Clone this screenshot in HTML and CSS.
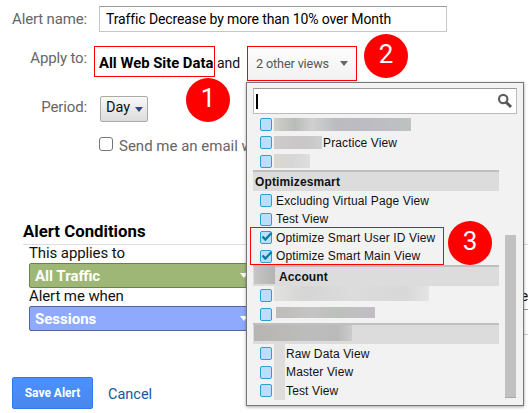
FILE: index.html
```html
<!DOCTYPE html>
<html lang="en">
<head>
    <meta charset="UTF-8">
    <title>Custom Alert</title>
    <link rel="stylesheet" href="styles.css">
</head>
<body>
    <div class="page">
        <div class="row row-name">
            <label class="label" for="alertName">Alert name:</label>
            <input class="name-input" id="alertName" type="text" value="Traffic Decrease by more than 10% over Month">
        </div>
        <div class="row row-apply">
            <span class="label">Apply to:</span>
            <strong class="site">All Web Site Data</strong>
            <span class="and">and</span>
            <div class="views"><span>2 other views</span><i class="arrow"></i></div>
        </div>
        <div class="row row-period">
            <span class="label">Period:</span>
            <div class="day">Day<i class="arrow arrow-blue"></i></div>
        </div>
        <div class="row row-email">
            <span class="box"></span>
            <span class="email-text">Send me an email w</span>
        </div>

        <h2>Alert Conditions</h2>
        <div class="conditions">
            <div class="column">
                <div class="caption">This applies to</div>
                <div class="select green"><span>All Traffic</span><i class="arrow arrow-white"></i></div>
                <div class="caption">Alert me when</div>
                <div class="select blue"><span>Sessions</span><i class="arrow arrow-white"></i></div>
            </div>
            <div class="column value">
                <div class="caption">e</div>
                <div class="value-input"></div>
            </div>
        </div>

        <div class="buttons">
            <div class="save">Save Alert</div>
            <a class="cancel">Cancel</a>
        </div>
    </div>

    <div class="popup">
        <div class="search">
            <span class="caret"></span>
            <svg width="16" height="16" viewBox="0 0 16 16">
                <circle cx="6.2" cy="6" r="4.2" fill="none" stroke="#606060" stroke-width="2.2"/>
                <path d="M9.2 9.2 L14 14" stroke="#555" stroke-width="3" fill="none"/>
            </svg>
        </div>
        <div class="scroll">
            <div class="list">
                <div class="item"><span class="check"></span><span class="blur b1"></span></div>
                <div class="item"><span class="check"></span><span class="blur b2"></span><span class="after">Practice View</span></div>
                <div class="item"><span class="check"></span><span class="blur b3"></span></div>
                <div class="group">Optimizesmart</div>
                <div class="item"><span class="check"></span><span class="text">Excluding Virtual Page View</span></div>
                <div class="item"><span class="check"></span><span class="text">Test View</span></div>
                <div class="item"><span class="check"><svg class="tick" width="14" height="12" viewBox="0 0 14 12"><path d="M2.5 5.5 L5.3 8.6 L11.5 2" fill="none" stroke="#087ba4" stroke-width="2.3"/></svg></span><span class="text">Optimize Smart User ID View</span></div>
                <div class="item"><span class="check"><svg class="tick" width="14" height="12" viewBox="0 0 14 12"><path d="M2.5 5.5 L5.3 8.6 L11.5 2" fill="none" stroke="#087ba4" stroke-width="2.3"/></svg></span><span class="text">Optimize Smart Main View</span></div>
                <div class="group"><span class="blur b4"></span>Account</div>
                <div class="item"><span class="check"></span><span class="blur b5"></span></div>
                <div class="item"><span class="check"></span><span class="blur b6"></span></div>
                <div class="group"><span class="blur b7"></span></div>
                <div class="item"><span class="check"></span><span class="blur b8"></span><span class="after">Raw Data View</span></div>
                <div class="item"><span class="check"></span><span class="blur b8"></span><span class="after">Master View</span></div>
                <div class="item"><span class="check"></span><span class="blur b8"></span><span class="after">Test View</span></div>
            </div>
            <div class="thumb"></div>
        </div>
    </div>

    <!-- annotations -->
    <div class="frame"></div>
    <div class="mark mark1">1</div>
    <div class="mark mark2">2</div>
    <div class="mark mark3">3</div>
</body>
</html>
```
FILE: styles.css
```css
* {
    box-sizing: border-box;
}

body {
    margin: 0;
    width: 528px;
    height: 413px;
    overflow: hidden;
    position: relative;
    background: #fff;
    font-family: Roboto, sans-serif;
    font-size: 15px;
    line-height: 18px;
    color: #111;
}

.page {
    padding-top: 6px;
}

.row {
    display: flex;
    align-items: flex-start;
}

.label {
    width: 87px;
    margin-right: 12px;
    text-align: right;
    letter-spacing: -0.15px;
    color: #666;
    flex: none;
}

.row-name {
    height: 40px;
}

.row-name .label {
    padding-top: 4px;
}

.name-input {
    width: 348px;
    height: 26px;
    padding: 0 6px;
    border: 1px solid #c6c6c6;
    border-top-color: #999;
    font-family: Roboto, sans-serif;
    font-size: 14px;
    letter-spacing: -0.12px;
    color: #000;
}

.row-apply {
    height: 50px;
}

.row-apply .label {
    margin-right: 7px;
    padding-top: 3px;
}

.site {
    width: 121px;
    height: 31px;
    border: 1px solid red;
    padding-left: 4px;
    font-size: 14.8px;
    line-height: 33px;
    color: #000;
    white-space: nowrap;
}

.and {
    width: 32px;
    padding-left: 2px;
    line-height: 35px;
    font-size: 14px;
}

.views {
    display: flex;
    align-items: center;
    justify-content: space-between;
    width: 110px;
    height: 35px;
    padding: 0 8px 0 8px;
    border: 1px solid red;
    background: linear-gradient(#fdfdfd, #f1f1f1);
    font-size: 12.7px;
    letter-spacing: -0.15px;
    color: #555;
}

.arrow {
    border: 4px solid transparent;
    border-top: 5px solid #666;
    border-bottom: 0;
}

.row-period {
    height: 41px;
}

.row-period .label {
    padding-top: 2px;
}

.day {
    display: flex;
    align-items: center;
    justify-content: space-between;
    width: 48px;
    height: 26px;
    margin-left: 1px;
    padding: 0 4px 2px 5px;
    border: 1px solid #aaa;
    border-radius: 2px;
    background: linear-gradient(#f8f8f8, #dcdcdc);
    font-size: 14.5px;
}

.arrow-blue {
    border-top-color: #33487c;
    margin-top: 2px;
}

.row-email {
    height: 85px;
    padding-left: 99px;
    color: #666;
}

.box {
    width: 14px;
    height: 14px;
    border: 1px solid #767676;
    border-radius: 3px;
}

.email-text {
    margin-left: 6px;
    white-space: nowrap;
}

h2 {
    height: 23px;
    margin: 0 0 0 23px;
    border-bottom: 1px solid #ddd;
    font-size: 16.8px;
    line-height: 19px;
    font-weight: bold;
    color: #000;
}

.conditions {
    display: flex;
    padding-left: 29px;
}

.column {
    width: 225px;
    flex: none;
}

.caption {
    height: 18px;
    line-height: 17px;
    letter-spacing: -0.1px;
}

.select {
    display: flex;
    align-items: center;
    justify-content: space-between;
    height: 25px;
    padding: 0 5px 0 5px;
    border: 1px solid;
    border-radius: 2px;
    font-weight: bold;
    color: #fff;
}

.green {
    background: #9eb776;
    border-color: #6c8347;
}

.blue {
    background: #8faafc;
    border-color: #5265a5;
}

.arrow-white {
    border-top-color: #fff;
}

.value {
    width: 274px;
    padding-top: 43px;
}

.value .caption {
    text-align: right;
}

.value-input {
    height: 26px;
    margin-top: 3px;
    border: 1px solid #ccc;
    border-top-color: #999;
    border-right: 0;
}

.buttons {
    display: flex;
    align-items: center;
    margin: 42px 0 0 12px;
}

.save {
    width: 81px;
    height: 32px;
    border: 1px solid #3079ed;
    border-radius: 2px;
    background: linear-gradient(#4d90fe, #4787ed);
    color: #fff;
    font-size: 12px;
    font-weight: bold;
    line-height: 30px;
    text-align: center;
}

.cancel {
    margin-left: 15px;
    padding-top: 3px;
    font-size: 14.5px;
    color: #15599b;
}

/* view picker */
.popup {
    position: absolute;
    left: 246px;
    top: 82px;
    width: 278px;
    height: 324px;
    padding: 5px 6px 0;
    border: 1px solid #777;
    background: #f2f2f2;
    box-shadow: 0 1px 3px rgba(0, 0, 0, 0.35);
    font-family: "Liberation Sans", Arial, sans-serif;
    font-size: 12px;
    letter-spacing: 0.13px;
    color: #111;
}

.search {
    display: flex;
    align-items: center;
    justify-content: space-between;
    height: 26px;
    padding: 0 3px 0 2px;
    border: 1px solid #bbb;
    border-top-color: #999;
    background: #fff;
}

.caret {
    width: 2px;
    height: 15px;
    background: #000;
}

.scroll {
    display: flex;
    align-items: flex-end;
    height: 284px;
}

.list {
    width: 246px;
    height: 284px;
}

.item {
    display: flex;
    align-items: center;
    height: 18.5px;
    padding-top: 1.5px;
    padding-left: 7px;
    white-space: nowrap;
}

.check {
    width: 12px;
    height: 13px;
    border: 1px solid #27a3d2;
    border-radius: 2px;
    background: #bdddff;
    flex: none;
}

.tick {
    display: block;
    margin: -1px;
}

.text {
    margin-left: 4px;
}

.group {
    display: flex;
    align-items: center;
    height: 21px;
    padding-top: 1px;
    padding-left: 2px;
    border-top: 2px solid #bfbfbf;
    background: #dcdcdc;
    font-weight: bold;
}

.after {
    margin-left: 1px;
}

.blur {
    height: 13px;
    margin-left: 2px;
    background: #ccc;
    flex: none;
}

.b1 { width: 137px; background: linear-gradient(90deg, #d0cfc8, #b9bcb9 15%, #d0d0d0 28%, #bbbdc0 45%, #bdbbc3 65%, #bdc2c1); }
.b2 { width: 48px; background: linear-gradient(90deg, #cdcbca, #c8c6c7 60%, #cfcfcf); }
.b3 { width: 36px; height: 14px; background: linear-gradient(90deg, #dad8cf, #d6d6d6 50%, #dedede); }
.b4 { width: 21px; height: 18px; margin: -3px 4px 0 -1px; background: linear-gradient(90deg, #c6c6c6, #b5b4b1); }
.b5 { width: 155px; height: 15px; margin-top: -4px; background: linear-gradient(90deg, #e2e2df, #d6d5d5 20%, #dddcdc 50%, #d8d8d8 85%, #e4e4e4); }
.b6 { width: 99px; height: 11px; margin: -3px 0 0 4px; background: linear-gradient(90deg, #bfbcb8, #c4c4c4 35%, #bdc0bc 60%, #c1bec4); }
.b7 { width: 98px; height: 16px; margin: -4px 0 0 -1px; background: linear-gradient(90deg, #b7b5b1, #bdbdbd 55%, #bababa 85%, #cbcbcb); }
.b8 { width: 11px; height: 18.5px; background: #dedddc; }

.thumb {
    width: 11px;
    height: 163px;
    margin-left: 6px;
    background: #c1c1c1;
    border-bottom: 1px solid #a8a8a8;
}

/* annotations */
.frame {
    position: absolute;
    left: 250px;
    top: 227px;
    width: 194px;
    height: 38px;
    border: 1px solid red;
}

.mark {
    position: absolute;
    width: 44px;
    height: 44px;
    border-radius: 50%;
    background: red;
    color: #fff;
    font-size: 26px;
    line-height: 40px;
    text-align: center;
}

.mark1 { left: 186px; top: 78px; }
.mark2 { left: 364px; top: 34px; }
.mark3 { left: 448px; top: 221px; }
```
